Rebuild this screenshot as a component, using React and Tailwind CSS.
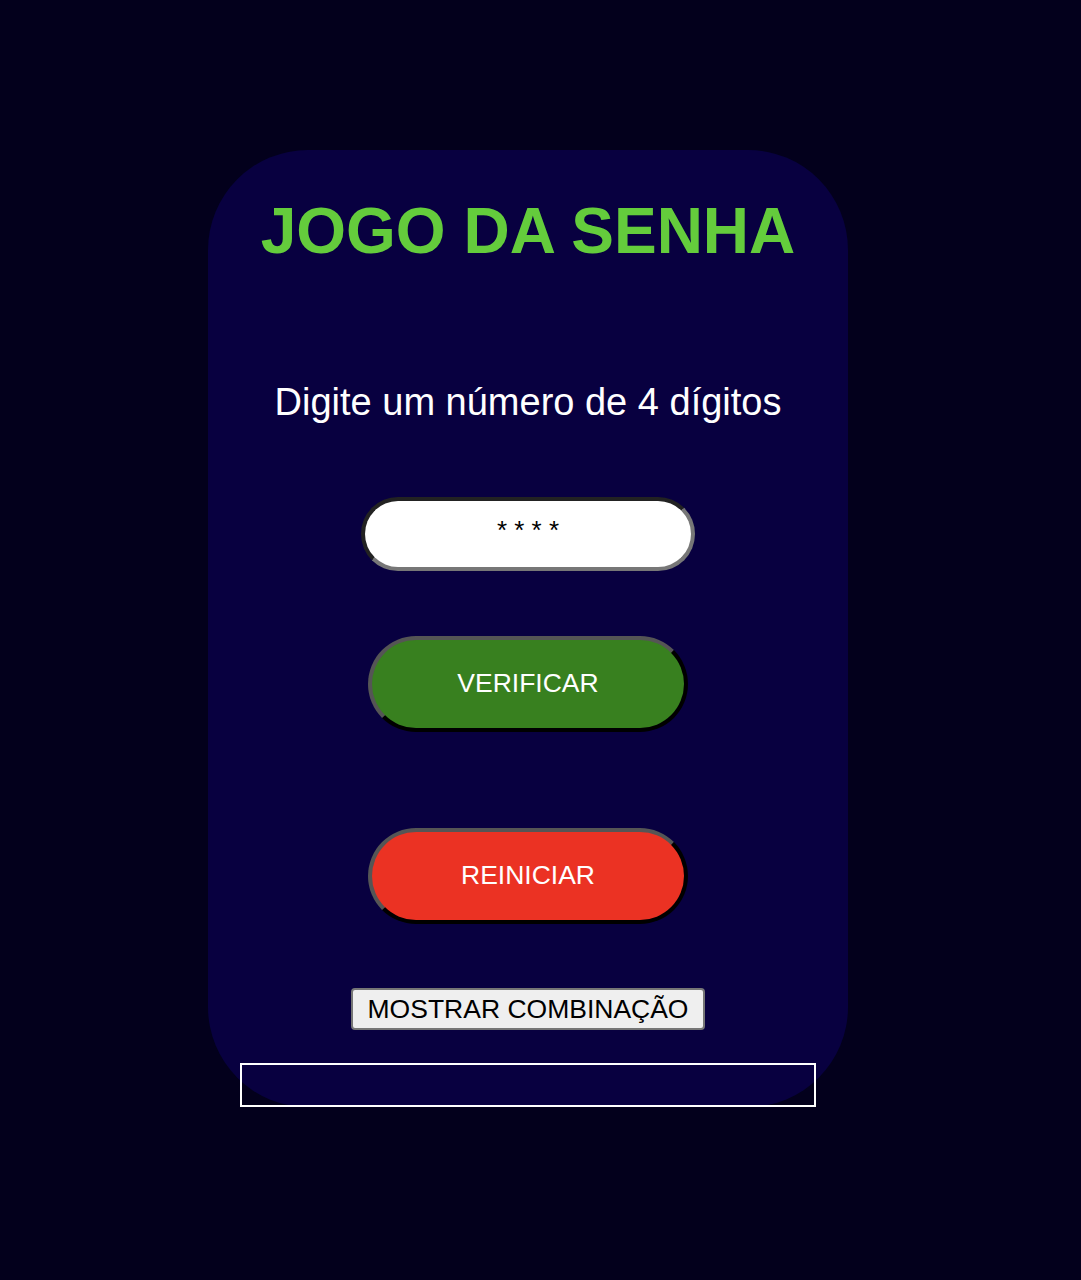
export default function App() {
  return (
    <div className="min-h-[1280px] bg-[#03001c] pt-[150px] font-['Liberation_Sans',Arial,sans-serif]">
      <div className="ml-[208px] flex w-[640px] flex-col items-center rounded-[100px] bg-[#080040] px-8 pt-[41px]">
        <h1 className="whitespace-nowrap text-[64px] font-bold leading-[80px] text-[#64cc3c]">JOGO DA SENHA</h1>

        <p className="mt-[111px] whitespace-nowrap text-[38px] leading-[40px] text-white">Digite um número de 4 dígitos</p>

        <input
          type="text"
          maxLength={4}
          placeholder="* * * *"
          className="mt-[75px] h-[74px] w-[334px] shrink-0 rounded-full border-4 border-t-[#222] border-l-[#222] border-b-[#777] border-r-[#777] bg-white pb-2 text-center text-[26px] text-black outline-none placeholder:text-black"
        />

        <button className="mt-[65px] h-[96px] w-[320px] shrink-0 rounded-full border-4 border-t-[#555] border-l-[#555] border-b-black border-r-black bg-[#38801f] text-[26.5px] text-white">
          VERIFICAR
        </button>

        <button className="mt-[96px] h-[96px] w-[320px] shrink-0 rounded-full border-4 border-t-[#555] border-l-[#555] border-b-black border-r-black bg-[#eb3223] text-[26.5px] text-white">
          REINICIAR
        </button>

        <button className="mt-[64px] h-[42px] w-[354px] shrink-0 rounded-[4px] border-2 border-[#767676] bg-[#efefef] text-[26.5px] text-black">
          MOSTRAR COMBINAÇÃO
        </button>

        <div className="mt-[33px] h-[44px] w-full shrink-0 border-2 border-white"></div>
      </div>
    </div>
  );
}
